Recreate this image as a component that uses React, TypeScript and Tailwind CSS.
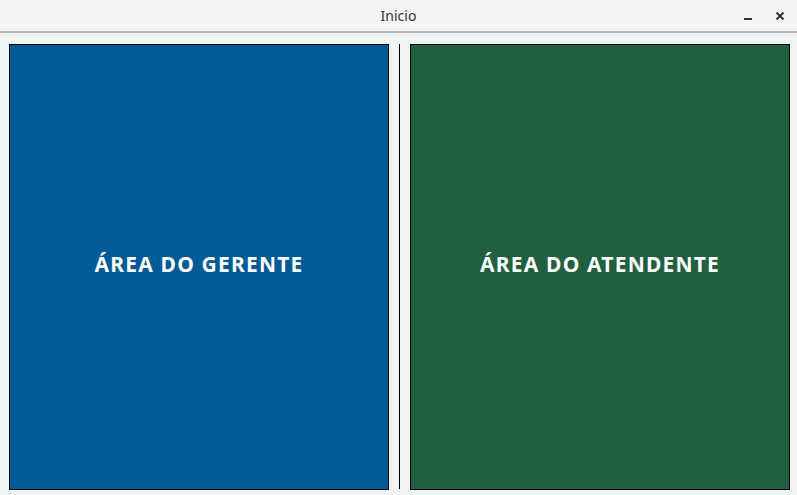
export default function App() {
  return (
    <div className="w-[797px] h-[495px] bg-[#eef3f3] flex flex-col overflow-hidden font-['Noto_Sans',sans-serif]">
      {/* title bar */}
      <div className="h-[33px] bg-[#f4f4f4] border-b-2 border-[#b4b6b6] relative flex items-center justify-center shrink-0">
        <span className="text-[14px] text-[#2e3436]">Inicio</span>
        <div className="absolute right-[12px] top-0 h-full flex items-center gap-[22px]">
          <svg width="10" height="10" viewBox="0 0 10 10">
            <rect x="1" y="7" width="8" height="2" fill="#2e3436" />
          </svg>
          <svg width="10" height="10" viewBox="0 0 10 10">
            <path d="M1.5 1.5 L8.5 8.5 M8.5 1.5 L1.5 8.5" stroke="#2e3436" strokeWidth="2" />
          </svg>
        </div>
      </div>

      {/* content */}
      <div className="flex pl-[9px] pt-[11px] gap-[10px]">
        <button className="w-[380px] h-[446px] bg-[#005a96] border border-black flex items-center justify-center pb-[4px]">
          <span className="text-white font-bold text-[21px] tracking-[1.2px]">ÁREA DO GERENTE</span>
        </button>
        <div className="w-px h-[445px] bg-black" />
        <button className="w-[380px] h-[446px] bg-[#215f41] border border-black flex items-center justify-center pb-[4px]">
          <span className="text-white font-bold text-[21px] tracking-[1.2px]">ÁREA DO ATENDENTE</span>
        </button>
      </div>
    </div>
  )
}
